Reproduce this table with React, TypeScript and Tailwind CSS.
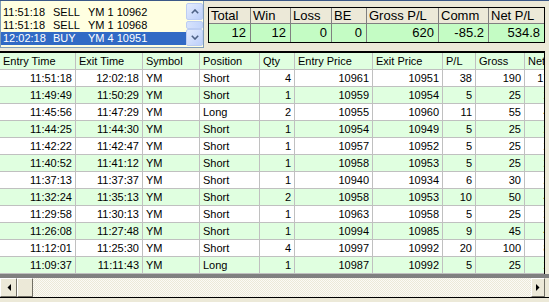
import React from "react";

type Row = [string, string, string, string, number, number, number, number, number, string];

const rows: Row[] = [
  ["11:51:18", "12:02:18", "YM", "Short", 4, 10961, 10951, 38, 190, "172.96"],
  ["11:49:49", "11:50:29", "YM", "Short", 1, 10959, 10954, 5, 25, "20.74"],
  ["11:45:56", "11:47:29", "YM", "Long", 2, 10955, 10960, 11, 55, "46.48"],
  ["11:44:25", "11:44:30", "YM", "Short", 1, 10954, 10949, 5, 25, "20.74"],
  ["11:42:22", "11:42:47", "YM", "Short", 1, 10957, 10952, 5, 25, "20.74"],
  ["11:40:52", "11:41:12", "YM", "Short", 1, 10958, 10953, 5, 25, "20.74"],
  ["11:37:13", "11:37:37", "YM", "Short", 1, 10940, 10934, 6, 30, "25.74"],
  ["11:32:24", "11:35:13", "YM", "Short", 2, 10958, 10953, 10, 50, "41.48"],
  ["11:29:58", "11:30:13", "YM", "Short", 1, 10963, 10958, 5, 25, "20.74"],
  ["11:26:08", "11:27:48", "YM", "Short", 1, 10994, 10985, 9, 45, "40.74"],
  ["11:12:01", "11:25:30", "YM", "Short", 4, 10997, 10992, 20, 100, "82.96"],
  ["11:09:37", "11:11:43", "YM", "Long", 1, 10987, 10992, 5, 25, "20.74"],
];

const items = [
  ["11:51:18", "SELL", "YM 1 10962"],
  ["11:51:18", "SELL", "YM 1 10968"],
  ["12:02:18", "BUY", "YM 4 10951"],
];

const headers = ["Entry Time", "Exit Time", "Symbol", "Position", "Qty", "Entry Price", "Exit Price", "P/L", "Gross", "Net"];
const alignRight = [true, true, false, false, true, true, true, true, true, true];

const gridCols = "grid grid-cols-[76px_67px_57px_60px_35px_78px_70px_33px_49px_50px] w-[575px]";

const summaryHead = ["Total", "Win", "Loss", "BE", "Gross P/L", "Comm", "Net P/L"];
const summaryVals = ["12", "12", "0", "0", "620", "-85.2", "534.8"];
const summaryCols = "grid grid-cols-[42px_40px_41px_35px_72px_50px_55px]";

function XpBtn({ up }: { up: boolean }) {
  return (
    <div className="h-[17px] w-[17px] rounded-[2px] border border-[#bccdf3] bg-gradient-to-br from-[#e4ecfd] to-[#bccffa] flex items-center justify-center">
      <svg width="8" height="5" viewBox="0 0 8 5">
        <path
          d={up ? "M0.8 4.2 L4 1 L7.2 4.2" : "M0.8 0.8 L4 4 L7.2 0.8"}
          stroke="#4d6185"
          strokeWidth="1.6"
          fill="none"
        />
      </svg>
    </div>
  );
}

function ClassicBtn({ left, w }: { left: boolean; w: string }) {
  return (
    <div
      className={`${w} h-full bg-[#ece9d8] border border-t-white border-l-white border-r-[#716f64] border-b-[#716f64] flex items-center justify-center`}
    >
      <svg width="4" height="7" viewBox="0 0 4 7">
        <path d={left ? "M4 0 L0.5 3.5 L4 7 Z" : "M0 0 L3.5 3.5 L0 7 Z"} fill="#000" />
      </svg>
    </div>
  );
}

export default function App() {
  return (
    <div className="w-[549px] h-[302px] overflow-hidden bg-[#ece9d8] font-['Liberation_Sans',Arial,sans-serif] text-black flex flex-col">
      <div className="h-px shrink-0 bg-[#3b5887]" />
      <div className="h-[49px] shrink-0 flex">
        {/* list box */}
        <div className="w-[204px] h-[47px] bg-[#ffffe1] border border-t-0 border-[#7f9db9] flex">
          <div className="flex-1 pt-[5px] text-[11px] leading-[13px]">
            {items.map((it, i) => (
              <div
                key={i}
                className={`h-[13px] flex whitespace-nowrap ${i === 2 ? "bg-[#316ac5] text-white" : ""}`}
              >
                <span className="w-[52px] pl-[2px]">{it[0]}</span>
                <span className="w-[35px]">{it[1]}</span>
                <span>{it[2]}</span>
              </div>
            ))}
          </div>
          <div className="w-[17px] pt-[2px] flex flex-col">
            <XpBtn up />
            <div className="h-[9px] flex items-center">
              <div className="h-[8px] w-full rounded-[2px] border border-[#bccdf3] bg-gradient-to-r from-[#d6e2fc] to-[#c3d5fb]" />
            </div>
            <XpBtn up={false} />
          </div>
        </div>
        {/* summary */}
        <div className="flex-1 pt-[6px] pl-[4px] pr-[4px]">
          <div className="border border-black text-[13px] bg-[#ece9d8]">
            <div className={summaryCols}>
              {summaryHead.map((h, i) => (
                <div
                  key={h}
                  className={`h-[16px] leading-[15px] pl-[2px] border-b border-[#808080] ${i < 6 ? "border-r" : ""} whitespace-nowrap overflow-hidden`}
                >
                  {h}
                </div>
              ))}
              {summaryVals.map((v, i) => (
                <div
                  key={i}
                  className={`h-[18px] leading-[18px] pr-[4px] text-right bg-[#c4fcc4] ${i < 6 ? "border-r border-[#808080]" : ""} whitespace-nowrap overflow-hidden`}
                >
                  {v}
                </div>
              ))}
            </div>
          </div>
        </div>
      </div>

      <div className="h-px shrink-0" />
      {/* main grid */}
      <div className="flex shrink-0">
        <div className="w-[545px] shrink-0 border-t-2 border-r border-black bg-white text-[11px]">
          <div className="w-[544px] overflow-hidden">
            <div className={gridCols}>
              {headers.map((h) => (
                <div
                  key={h}
                  className="h-[17px] leading-[16px] pl-[3px] bg-[#e0ffe0] border-r border-b border-[#c0c0c0] whitespace-nowrap overflow-hidden"
                >
                  {h}
                </div>
              ))}
              {rows.map((r, ri) =>
                r.map((c, ci) => (
                  <div
                    key={`${ri}-${ci}`}
                    className={`h-[17px] leading-[16px] ${alignRight[ci] ? "text-right pr-[3px]" : "pl-[3px]"} ${
                      ri % 2 === 1 ? "bg-[#e0ffe0]" : "bg-white"
                    } border-r border-b border-[#c0c0c0] whitespace-nowrap overflow-hidden`}
                  >
                    {c}
                  </div>
                ))
              )}
            </div>
          </div>
        </div>
        <div className="flex-1" />
      </div>
      <div className="h-[4px] shrink-0 bg-[#808080]" />
      <div className="h-[19px] shrink-0 flex">
        <ClassicBtn left w="w-[17px]" />
        <div className="w-[16px] h-full bg-[#ece9d8] border border-t-white border-l-white border-r-[#716f64] border-b-[#716f64]" />
        <div className="flex-1 h-full bg-[image:repeating-conic-gradient(#ece9d8_0%_25%,#fbfaf6_0%_50%)] bg-[length:2px_2px]" />
        <ClassicBtn left={false} w="w-[14px]" />
        <div className="w-[4px] h-full bg-[#ece9d8]" />
      </div>
      <div className="h-px shrink-0 bg-black" />
      <div className="flex-1 bg-[#ece9d8]" />
    </div>
  );
}
